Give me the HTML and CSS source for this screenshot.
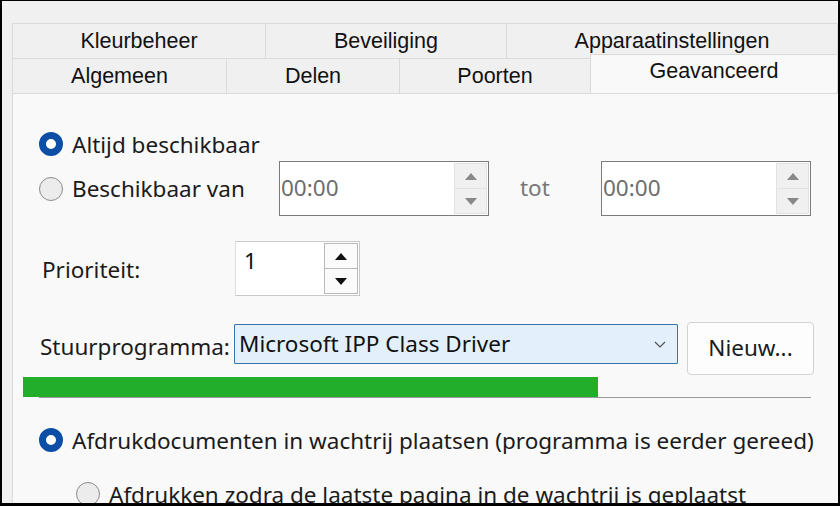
FILE: index.html
```html
<!DOCTYPE html>
<html lang="nl">
<head>
<meta charset="utf-8">
<title>Geavanceerd</title>
<link rel="stylesheet" href="styles.css">
</head>
<body>
<div class="frame">
  <div class="tabs">
    <div class="tabrow row-back">
      <div class="tab t-kleur">Kleurbeheer</div>
      <div class="tab t-bev">Beveiliging</div>
      <div class="tab t-app">Apparaatinstellingen</div>
    </div>
    <div class="tabrow row-front">
      <div class="tab t-alg">Algemeen</div>
      <div class="tab t-del">Delen</div>
      <div class="tab t-poo">Poorten</div>
      <div class="tab t-gea selected">Geavanceerd</div>
    </div>
  </div>
  <div class="panel">
    <div class="row r1">
      <span class="radio checked"></span>
      <span class="lbl">Altijd beschikbaar</span>
    </div>
    <div class="row r2">
      <div class="col-a">
        <span class="radio"></span>
        <span class="lbl">Beschikbaar van</span>
      </div>
      <div class="spinbox time">
        <span class="val">00:00</span>
        <div class="spin">
          <span class="btn"><span class="arr up"></span></span>
          <span class="btn"><span class="arr down"></span></span>
        </div>
      </div>
      <span class="tot">tot</span>
      <div class="spinbox time">
        <span class="val">00:00</span>
        <div class="spin">
          <span class="btn"><span class="arr up"></span></span>
          <span class="btn"><span class="arr down"></span></span>
        </div>
      </div>
    </div>
    <div class="row r3">
      <span class="lbl col-b">Prioriteit:</span>
      <div class="spinbox prio">
        <span class="val">1</span>
        <div class="spin">
          <span class="btn"><span class="arr up"></span></span>
          <span class="btn"><span class="arr down"></span></span>
        </div>
      </div>
    </div>
    <div class="row r4">
      <span class="lbl col-c">Stuurprogramma:</span>
      <div class="combo">
        <span class="val">Microsoft IPP Class Driver</span>
        <svg class="chev" width="12" height="7" viewBox="0 0 12 7"><path d="M1 1 L6 6 L11 1" fill="none" stroke="#505050" stroke-width="1.2"/></svg>
      </div>
      <div class="button">Nieuw...</div>
    </div>
    <div class="sep">
      <div class="bar"></div>
      <div class="line"></div>
    </div>
    <div class="row r5">
      <span class="radio checked"></span>
      <span class="lbl">Afdrukdocumenten in wachtrij plaatsen (programma is eerder gereed)</span>
    </div>
    <div class="row r6">
      <span class="radio"></span>
      <span class="lbl">Afdrukken zodra de laatste pagina in de wachtrij is geplaatst</span>
    </div>
  </div>
</div>
</body>
</html>
```

FILE: styles.css
```css
* { box-sizing: border-box; }
html, body { margin: 0; padding: 0; }
body { width: 840px; height: 506px; overflow: hidden; background: #000; }

.frame {
  width: 840px;
  height: 506px;
  border: 2px solid #000;
  border-top-width: 1px;
  border-bottom-width: 3px;
  background: #f0f0f0;
  overflow: hidden;
  display: flex;
  flex-direction: column;
  padding: 22px 0 0 10px;
  font-family: "Noto Sans", "Open Sans", sans-serif;
  color: #1b1b1b;
}

/* ---------- tabs ---------- */
.tabs { display: flex; flex-direction: column; width: 826px; }
.tabrow { display: flex; height: 35px; }
.tab {
  font-family: "Liberation Sans", Arial, sans-serif;
  font-size: 21.5px;
  color: #111;
  background: #f0f0f0;
  border-top: 1px solid #dadada;
  border-left: 1px solid #dadada;
  display: flex;
  align-items: center;
  justify-content: center;
  padding-bottom: 0;
}
.row-back .tab:last-child, .row-front .tab:last-child { border-right: 1px solid #dadada; }
.t-kleur { width: 253px; }
.t-bev { width: 241px; }
.t-app { width: 332px; }
.t-alg { width: 214px; }
.t-del { width: 173px; }
.t-poo { width: 191px; }
.t-gea { width: 248px; }
.tab.selected {
  background: #f9f9f9;
  height: 39px;
  margin-top: -4px;
  padding-bottom: 5px;
  position: relative;
  z-index: 2;
}

/* ---------- panel ---------- */
.panel {
  flex: 1;
  width: 826px;
  background: #f9f9f9;
  border-left: 1px solid #dadada;
  border-top: 1px solid #dadada;
  padding-left: 26px;
  display: flex;
  flex-direction: column;
}
.row { display: flex; align-items: center; }
.lbl { font-size: 22.5px; white-space: nowrap; }

.radio {
  width: 24px;
  height: 24px;
  border-radius: 50%;
  border: 1px solid #8b8b8b;
  background: #ececec;
  flex: none;
  margin-right: 9px;
}
.radio.checked {
  border: 7px solid #0d4fa6;
  background: #fff;
}

.r1 { margin-top: 38px; height: 24px; }
.r2 { margin-top: 5px; height: 55px; }
.col-a { display: flex; align-items: center; width: 240px; }

.spinbox {
  display: flex;
  align-items: stretch;
  background: #fff;
  height: 55px;
}
.spinbox .val { flex: 1; }
.time {
  width: 210px;
  border: 1px solid #7b7b7b;
  padding: 1px;
}
.time .val {
  color: #6d6d6d;
  font-size: 22.5px;
  display: flex;
  align-items: center;
  padding-left: 0;
  padding-bottom: 2px;
}
.spin { display: flex; flex-direction: column; width: 33px; }
.btn {
  flex: 1;
  display: flex;
  align-items: center;
  justify-content: center;
}
.time .btn { background: #f0f0f0; border: 1px solid #e2e2e2; }
.time .btn + .btn { border-top: none; }
.arr { width: 0; height: 0; border-left: 6px solid transparent; border-right: 6px solid transparent; }
.arr.up { border-bottom: 7px solid #888; }
.arr.down { border-top: 7px solid #888; }

.tot { color: #777; font-size: 22.5px; width: 112px; padding-left: 31px; padding-bottom: 2px; }

.r3 { margin-top: 25px; height: 55px; }
.col-b { width: 196px; padding-left: 3px; padding-top: 1px; }
.prio {
  width: 125px;
  border: 1px solid #c9c9c9;
  border-left-color: #dedede;
  padding: 1px 1px 1px 0;
}
.prio .val { font-size: 22.5px; padding-left: 8px; padding-top: 2px; color: #111; }
.prio .spin { width: 34px; }
.prio .btn { background: #fbfbfb; border: 1px solid #b9b9b9; }
.prio .btn + .btn { border-top: none; }
.prio .arr.up { border-bottom-color: #111; }
.prio .arr.down { border-top-color: #111; }

.r4 { margin-top: 26px; height: 53px; align-items: flex-start; }
.col-c { width: 195px; padding-left: 1px; margin-top: 9px; }
.combo {
  width: 444px;
  height: 40px;
  margin-top: 2px;
  background: #e3f0fb;
  border: 1px solid #3b74a8;
  border-radius: 1px;
  display: flex;
  align-items: center;
  padding: 0 11px 0 4px;
}
.combo .val { flex: 1; font-size: 22.5px; padding-bottom: 2px; color: #111; }
.chev { flex: none; }
.button {
  margin-left: 9px;
  width: 127px;
  height: 53px;
  background: #fdfdfd;
  border: 1px solid #d3d3d3;
  border-radius: 4px;
  display: flex;
  align-items: center;
  justify-content: center;
  font-size: 22.5px;
  padding-bottom: 2px;
}

.sep { margin-top: 2px; margin-left: -16px; position: relative; height: 21px; }
.sep .bar { width: 575px; height: 20px; background: #22ad2a; position: relative; z-index: 1; }
.sep .line { position: absolute; left: 16px; top: 20px; width: 772px; height: 1px; background: #9a9a9a; }

.r5 { margin-top: 30px; height: 24px; }
.r6 { margin-top: 30px; height: 24px; padding-left: 37px; }
```
